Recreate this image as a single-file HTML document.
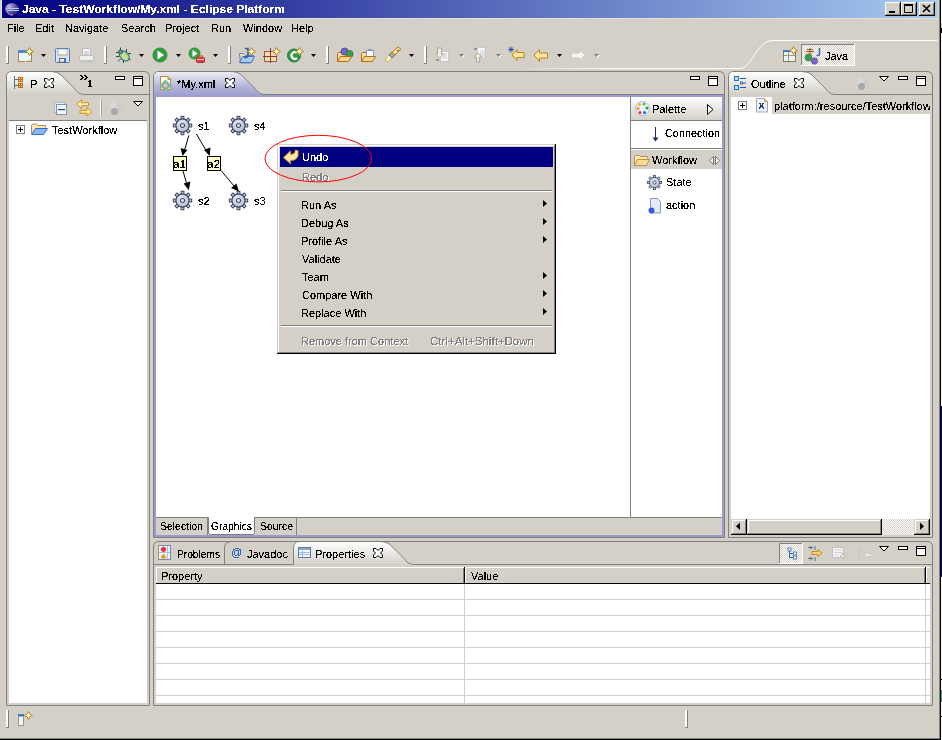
<!DOCTYPE html>
<html><head><meta charset="utf-8">
<style>
html,body{margin:0;padding:0;width:942px;height:740px;overflow:hidden;background:#D4D0C8;}
svg{display:block;will-change:transform;}
text{font-family:"Liberation Sans",sans-serif;font-size:11px;fill:#000;filter:url(#crisp);}
.b{font-weight:bold;}
.dis{fill:#808080;}
.sh{fill:#fff;}
</style></head>
<body>
<svg width="942" height="740" viewBox="0 0 942 740">
<defs><filter id="crisp" x="-10%" y="-20%" width="120%" height="140%" filterUnits="objectBoundingBox"><feComponentTransfer><feFuncA type="discrete" tableValues="0 0 1 1 1"/></feComponentTransfer></filter>
  <linearGradient id="gTitle" x1="0" x2="1" y1="0" y2="0">
    <stop offset="0" stop-color="#000080"/><stop offset="1" stop-color="#A6CAF0"/>
  </linearGradient>
  <linearGradient id="gTabW" x1="0" x2="0" y1="0" y2="1">
    <stop offset="0" stop-color="#FFFFFF"/><stop offset="1" stop-color="#D4D0C8"/>
  </linearGradient>
  <linearGradient id="gTabE" x1="0" x2="0" y1="0" y2="1">
    <stop offset="0" stop-color="#EEEEF6"/><stop offset="0.55" stop-color="#B6B6DA"/><stop offset="1" stop-color="#9A9ACC"/>
  </linearGradient>
  <linearGradient id="gPal" x1="0" x2="0" y1="0" y2="1">
    <stop offset="0" stop-color="#FFFFFF"/><stop offset="1" stop-color="#D4D0C8"/>
  </linearGradient>
  <linearGradient id="gPersp" x1="0" x2="1" y1="0" y2="0">
    <stop offset="0" stop-color="#D4D0C8"/><stop offset="1" stop-color="#FFFFFF"/>
  </linearGradient>
  <pattern id="chk" width="2" height="2" patternUnits="userSpaceOnUse">
    <rect width="2" height="2" fill="#D4D0C8"/><rect width="1" height="1" fill="#FFFFFF"/><rect x="1" y="1" width="1" height="1" fill="#FFFFFF"/>
  </pattern>

  <g id="closeX"><path d="M0.5 0.5H3L5 2.5L7 0.5H9.5V3L7.5 5L9.5 7V9.5H7L5 7.5L3 9.5H0.5V7L2.5 5L0.5 3Z" fill="#fff" stroke="#000"/></g>
  <g id="minBtn"><rect x="0.5" y="0.5" width="9" height="3" fill="#fff" stroke="#000"/></g>
  <g id="maxBtn"><rect x="0.5" y="0.5" width="9" height="9" fill="#fff" stroke="#000"/><rect x="1" y="2" width="8" height="1" fill="#000"/></g>
  <g id="viewMenu"><path d="M0.5 0.5H9.5L5 5Z" fill="#fff" stroke="#000" stroke-linejoin="bevel"/></g>
  <g id="plusBox"><rect x="0.5" y="0.5" width="8" height="8" fill="#fff" stroke="#808080"/><path d="M2 4.5H7M4.5 2V7" stroke="#000"/></g>

  <g id="gear">
   <g fill="#D0D6E4" stroke="#3A4262" stroke-width="1"><rect x="-1.4" y="-9.2" width="2.8" height="3" transform="rotate(0)"/><rect x="-1.4" y="-9.2" width="2.8" height="3" transform="rotate(45)"/><rect x="-1.4" y="-9.2" width="2.8" height="3" transform="rotate(90)"/><rect x="-1.4" y="-9.2" width="2.8" height="3" transform="rotate(135)"/><rect x="-1.4" y="-9.2" width="2.8" height="3" transform="rotate(180)"/><rect x="-1.4" y="-9.2" width="2.8" height="3" transform="rotate(225)"/><rect x="-1.4" y="-9.2" width="2.8" height="3" transform="rotate(270)"/><rect x="-1.4" y="-9.2" width="2.8" height="3" transform="rotate(315)"/></g>
   <circle cx="0" cy="0" r="6.6" fill="url(#gGear)" stroke="#3A4262" stroke-width="1.1"/>
   <circle cx="0" cy="0" r="2" fill="#fff" stroke="#3A4262" stroke-width="1.2"/>
  </g>
  <radialGradient id="gGear" cx="0.4" cy="0.35" r="0.75"><stop offset="0" stop-color="#E4E8F2"/><stop offset="1" stop-color="#B0B8CC"/></radialGradient>
  <g id="subArrow"><path d="M0 0V7L4 3.5Z" fill="#000"/></g>
<g id="star"><path d="M0 -4 L1.3 -1.3 L4 0 L1.3 1.3 L0 4 L-1.3 1.3 L-4 0 L-1.3 -1.3 Z" fill="#FFF6C8" stroke="#B8880C" stroke-width="1" stroke-linejoin="round"/><path d="M0 -2.5V2.5M-2.5 0H2.5" stroke="#fff" stroke-width="0.9"/></g></defs>

<!-- window frame -->
<rect x="0" y="0" width="942" height="740" fill="#D4D0C8"/>
<rect x="1" y="0" width="1" height="19" fill="#ECE9E2"/><rect x="1" y="18" width="936" height="1" fill="#E4E1DA"/>
<rect x="939" y="0" width="1" height="739" fill="#808080"/>
<rect x="940" y="0" width="1" height="740" fill="#000"/>
<rect x="941" y="0" width="1" height="740" fill="#FFFFFF"/>
<rect x="941" y="406" width="1" height="171" fill="#000080"/><rect x="941" y="23" width="1" height="5" fill="#D4D0C8"/><rect x="941" y="28" width="1" height="5" fill="#000"/><rect x="941" y="50" width="1" height="355" fill="#F4F4F4"/><rect x="941" y="679" width="1" height="1" fill="#000"/><rect x="941" y="690" width="1" height="12" fill="#4A9A8A"/><rect x="941" y="716" width="1" height="1" fill="#000"/>
<rect x="0" y="738" width="940" height="1" fill="#808080"/>
<rect x="0" y="739" width="941" height="1" fill="#000"/>

<!-- title bar -->
<rect x="2" y="0" width="935" height="18" fill="url(#gTitle)"/>
<text x="22" y="13" class="b" style="fill:#fff" textLength="263" lengthAdjust="spacingAndGlyphs">Java - TestWorkflow/My.xml - Eclipse Platform</text>

<!-- window buttons -->
<g id="wbtns">
 <g transform="translate(885,2)">
  <rect x="0" y="0" width="16" height="14" fill="#000"/>
  <rect x="0" y="0" width="15" height="13" fill="#fff"/>
  <rect x="1" y="1" width="14" height="12" fill="#808080"/>
  <rect x="1" y="1" width="13" height="11" fill="#D4D0C8"/>
  <rect x="4" y="9" width="6" height="2" fill="#000"/>
 </g>
 <g transform="translate(901,2)">
  <rect x="0" y="0" width="16" height="14" fill="#000"/>
  <rect x="0" y="0" width="15" height="13" fill="#fff"/>
  <rect x="1" y="1" width="14" height="12" fill="#808080"/>
  <rect x="1" y="1" width="13" height="11" fill="#D4D0C8"/>
  <path d="M3.5 2.5 h8 v8 h-8 z" fill="none" stroke="#000"/><rect x="3" y="2" width="9" height="2" fill="#000"/>
 </g>
 <g transform="translate(919,2)">
  <rect x="0" y="0" width="16" height="14" fill="#000"/>
  <rect x="0" y="0" width="15" height="13" fill="#fff"/>
  <rect x="1" y="1" width="14" height="12" fill="#808080"/>
  <rect x="1" y="1" width="13" height="11" fill="#D4D0C8"/>
  <path d="M4 3 L11 10 M11 3 L4 10" stroke="#000" stroke-width="1.6"/>
 </g>
</g>
<!-- eclipse icon -->
<g transform="translate(5,3)">
  <defs><radialGradient id="gEcl" cx="0.3" cy="0.3" r="0.8"><stop offset="0" stop-color="#C8B8E8"/><stop offset="0.5" stop-color="#6A5AA8"/><stop offset="1" stop-color="#2A2070"/></radialGradient></defs>
  <ellipse cx="7" cy="6" rx="7" ry="6" fill="url(#gEcl)"/>
  <path d="M2 8.5 A6 6 0 0 0 8 12" stroke="#E8A0C8" stroke-width="1" fill="none"/>
  <rect x="1" y="5" width="13" height="1" fill="#A8C8F0"/>
  <rect x="1" y="7" width="13" height="1" fill="#A8C8F0"/>
</g>

<!-- menu -->
<text x="7" y="32">File</text>
<text x="35" y="32">Edit</text>
<text x="65" y="32">Navigate</text>
<text x="121" y="32">Search</text>
<text x="165" y="32">Project</text>
<text x="211" y="32">Run</text>
<text x="243" y="32">Window</text>
<text x="291" y="32">Help</text>

<!-- perspective bar line -->
<linearGradient id="gPL" gradientUnits="userSpaceOnUse" x1="520" y1="0" x2="610" y2="0"><stop offset="0" stop-color="#D4D0C8"/><stop offset="1" stop-color="#FFFFFF"/></linearGradient>
<path d="M520 68.5 H740 C752 68.5 756 40.5 773 40.5 H937" fill="none" stroke="url(#gPL)" stroke-width="1"/>


<!-- TOOLBAR -->
<g id="toolbar">
 <!-- separators -->
 <g><rect x="6" y="46" width="2" height="17" fill="#fff"/><rect x="8" y="46" width="1" height="18" fill="#808080"/><rect x="6" y="63" width="3" height="1" fill="#808080"/><rect x="104" y="46" width="2" height="17" fill="#fff"/><rect x="106" y="46" width="1" height="18" fill="#808080"/><rect x="104" y="63" width="3" height="1" fill="#808080"/><rect x="228" y="46" width="2" height="17" fill="#fff"/><rect x="230" y="46" width="1" height="18" fill="#808080"/><rect x="228" y="63" width="3" height="1" fill="#808080"/><rect x="326" y="46" width="2" height="17" fill="#fff"/><rect x="328" y="46" width="1" height="18" fill="#808080"/><rect x="326" y="63" width="3" height="1" fill="#808080"/><rect x="424" y="46" width="2" height="17" fill="#fff"/><rect x="426" y="46" width="1" height="18" fill="#808080"/><rect x="424" y="63" width="3" height="1" fill="#808080"/><rect x="6" y="710" width="2" height="17" fill="#fff"/><rect x="8" y="710" width="1" height="18" fill="#808080"/><rect x="6" y="727" width="3" height="1" fill="#808080"/><rect x="685" y="710" width="2" height="17" fill="#fff"/><rect x="687" y="710" width="1" height="18" fill="#808080"/><rect x="685" y="727" width="3" height="1" fill="#808080"/></g>
 <!-- dropdown arrows -->
 <g fill="#000">
  <path d="M41 54h5l-2.5 3z"/><path d="M139 54h5l-2.5 3z"/><path d="M176 54h5l-2.5 3z"/><path d="M213 54h5l-2.5 3z"/><path d="M311 54h5l-2.5 3z"/><path d="M409 54h5l-2.5 3z"/><path d="M557 54h5l-2.5 3z"/>
 </g>
 <g fill="#fff"><path d="M460 55h5l-2.5 3z"/><path d="M497 55h5l-2.5 3z"/><path d="M595 55h5l-2.5 3z"/></g>
 <g fill="#808080"><path d="M459 54h5l-2.5 3z"/><path d="M496 54h5l-2.5 3z"/><path d="M594 54h5l-2.5 3z"/></g>

 <!-- new wizard -->
 <rect x="18.5" y="50.5" width="13" height="11" fill="#EAF6FF" stroke="#A08850"/>
 <rect x="18" y="50" width="12" height="3" fill="#4A88CC"/>
 <path d="M31 58 Q30 61 25 61.5" stroke="#F8D060" fill="none"/>
 <use href="#star" x="29.5" y="51.5"/>

 <!-- save -->
 <rect x="55.5" y="48.5" width="14" height="14" rx="1" fill="#D8E4F4" stroke="#5A7AB0"/>
 <rect x="58" y="49" width="9" height="6" fill="#F4F8FC" stroke="#8090A8" stroke-width="0.6"/>
 <rect x="58" y="54.5" width="9" height="1" fill="#E8C060"/>
 <rect x="59" y="58" width="7" height="5" fill="#4A70B0"/>
 <rect x="60" y="59" width="4" height="3" fill="#E8F0FA"/>
 <rect x="60" y="61" width="4" height="1" fill="#E8C060"/>

 <!-- print (disabled) -->
 <path d="M82.5 48.5h6l2 2v6h-8z" fill="#FAFAFA" stroke="#B8B8B8"/>
 <path d="M84 52h5M84 54h5" stroke="#A8A8A8" stroke-width="0.9"/>
 <rect x="79.5" y="55.5" width="14" height="5" rx="1" fill="#EEEEEE" stroke="#BDBDBD"/>
 <rect x="80" y="60" width="13" height="2.5" fill="#C4C4C4"/>
 <!-- debug bug -->
 <g stroke="#1E4E5A" stroke-width="1" fill="none">
  <path d="M120.5 47.5v3M116 52.5h3M116 56.5h3.5M118 61.5l2.5-2.5M123.5 63v-3M126.5 49v3M128 53.5h3M128 58l2.5 2"/>
 </g>
 <ellipse cx="124.3" cy="56" rx="5.8" ry="4" transform="rotate(45 124.3 56)" fill="#B8D890" stroke="#2A6A7A"/>
 <path d="M121.5 54l5 5" stroke="#E8F4D8" stroke-width="1"/>
 <circle cx="120.5" cy="52" r="2" fill="#6AA060" stroke="#1E4E5A" stroke-width="0.8"/>
 <!-- run -->
 <circle cx="160" cy="55" r="7" fill="#3AA040" stroke="#2A8A3A"/>
 <circle cx="160" cy="55" r="5.5" fill="#2E9A3E"/>
 <path d="M157.5 50.5 L164 55 L157.5 59.5 Z" fill="#fff"/>

 <!-- run ext -->
 <circle cx="194.5" cy="53.5" r="5.5" fill="#3AA040" stroke="#2A8A3A"/>
 <path d="M192.5 50 L197.5 53.5 L192.5 57 Z" fill="#fff"/>
 <rect x="196.5" y="57.5" width="8" height="5" rx="1" fill="#D84040" stroke="#B03030"/>
 <rect x="198.5" y="56" width="4" height="2" fill="none" stroke="#D84040"/>
 <rect x="197" y="59" width="7" height="1" fill="#F8C0C0"/>

 <!-- new java project -->
 <path d="M239.5 53.5 h4 l2 2 h8 v2 l-3 5.5 h-10 z" fill="#F8E4B0" stroke="#5A80C0"/>
 <path d="M239.5 62.5 l3 -6 h12 l-3 6 z" fill="#A8CCF0" stroke="#4A70C0"/>
 <path d="M245 48.5 h3 v7 q0 2 -2.5 2 h-1.5" stroke="#2A5AA8" stroke-width="1.6" fill="none"/>
 <use href="#star" x="251.5" y="51.5"/>

 <!-- new package -->
 <rect x="264.5" y="51.5" width="12" height="10" fill="#F4D8B0" stroke="#A05A38"/>
 <path d="M270.5 48 v15 M263 56.5 h14" stroke="#7A4030" stroke-width="1"/>
 <use href="#star" x="276.5" y="51.5"/>

 <!-- new class -->
 <circle cx="294" cy="55.5" r="6.5" fill="#2E9A4A" stroke="#1E7A3A"/>
 <path d="M297 52.8 A3.4 3.4 0 1 0 297 58.2" stroke="#fff" stroke-width="2.2" fill="none"/>
 <use href="#star" x="299.5" y="51.5"/>

 <!-- open type -->
 <path d="M337.5 61.5 v-8 l1-1 h4 l1 1 h6 v1" fill="#F8DCA0" stroke="#B86A10"/>
 <circle cx="344.5" cy="51.5" r="3.5" fill="#7A68C0" stroke="#5A48A0"/>
 <circle cx="349.5" cy="54" r="3.5" fill="#3AA050" stroke="#2A7A3A"/>
 <path d="M337.5 61.5 l3 -5 h11 l-3 5 z" fill="#FCD890" stroke="#B86A10"/>

 <!-- open task -->
 <path d="M361.5 61.5 v-8 l1-1 h4 l1 1 h6 v1" fill="#F8DCA0" stroke="#B86A10"/>
 <rect x="366.5" y="50.5" width="7" height="6" fill="#F4F8FF" stroke="#8A9AC0"/>
 <rect x="368" y="49" width="4" height="2" fill="#8A9AC0"/>
 <path d="M361.5 61.5 l3 -5 h11 l-3 5 z" fill="#FCD890" stroke="#B86A10"/>

 <!-- search pen -->
 <path d="M385 60 l3 2 l4 -4 l-3 -3 z" fill="#FFF8C0" stroke="#D8B060"/>
 <path d="M389 55 l3 3 l3 -3 l-3 -3 z" fill="#A8A8A8" stroke="#707070"/>
 <path d="M392 52 l3 3 l6 -6 l-3 -2 z" fill="#F8D890" stroke="#C08020"/>
 <circle cx="398" cy="50.5" r="0.8" fill="#2A4AA0"/>

 <!-- next annotation (disabled) -->
 <rect x="440.5" y="51.5" width="8" height="10" fill="#F8F8F8" stroke="#C8C8C8"/>
 <path d="M442 54h5M442 56h5M442 58h5" stroke="#C0C0C0" stroke-width="0.8"/>
 <path d="M437.5 48 v6 h-2 l4 4 l4 -4 h-2 v-6 z" fill="#F0EEE0" stroke="#A8A898"/>
 <rect x="436" y="59" width="3" height="2" fill="#9098A8"/>

 <!-- prev annotation (disabled) -->
 <rect x="477.5" y="47.5" width="8" height="11" fill="#F8F8F8" stroke="#C8C8C8"/>
 <path d="M480 51h5M480 53h5M480 55h5M480 57h5" stroke="#C0C0C0" stroke-width="0.8"/>
 <rect x="474" y="48" width="3" height="2" fill="#9098A8"/>
 <path d="M476.5 62 v-5 h-2.5 l4 -4 l4 4 h-2.5 v5 z" fill="#F0EEE0" stroke="#A8A898"/>

 <!-- last edit -->
 <path d="M512 55 l5 -5.5 v3 h7 v5 h-7 v3 z" fill="#FCE8A0" stroke="#C08010"/>
 <path d="M508 49.5 h6 M511 46.5 v6 M509 47.5 l4 4 M513 47.5 l-4 4" stroke="#2A4AA8" stroke-width="0.9"/>

 <!-- back -->
 <path d="M534 55 l5.5 -5.5 v3.5 h8 v5 h-8 v3.5 z" fill="#FCE8A0" stroke="#C08010"/>
 <!-- forward disabled -->
 <path d="M585 55 l-5.5 -5.5 v3.5 h-8 v5 h8 v3.5 z" fill="#F4F4F0" stroke="#C8C8C0"/>

 <!-- perspective: new persp icon -->
 <rect x="783.5" y="50.5" width="12" height="11" fill="#E8F4FC" stroke="#8A7A50"/>
 <rect x="783" y="50" width="11" height="2" fill="#3A7ACC"/>
 <path d="M788.5 52v9M784 55.5h11" stroke="#A89870"/>
 <use href="#star" x="793.5" y="50.5"/>
 <!-- java button -->
 <rect x="801" y="44" width="54" height="22" fill="url(#chk)"/>
 <path d="M801.5 65 V44.5 H854" stroke="#808080" fill="none"/>
 <path d="M801 65.5 H854.5 V44" stroke="#fff" fill="none"/>
 <rect x="807" y="49" width="6" height="5" fill="#F4D8A8"/>
 <path d="M810 48v8M806 51.5h8M807 49.5h6" stroke="#8A5030" stroke-width="0.9"/>
 <path d="M819.5 48v6q0 1.5-1.5 1.5h-1.5" stroke="#2A6AB8" stroke-width="1.5" fill="none"/>
 <circle cx="808.5" cy="57.5" r="3.5" fill="#3A9A50" stroke="#2A7A40" stroke-width="0.6"/>
 <circle cx="814.5" cy="61" r="3.2" fill="#7A68C0" stroke="#5A48A0" stroke-width="0.6"/>
 <text x="825" y="60">Java</text>
</g>

<!-- LEFT PANEL -->
<path d="M6.5 705.5 V77 Q6.5 71.5 12 71.5 H144 Q149.5 71.5 149.5 77 V705.5 Z" fill="#D4D0C8" stroke="#808080"/>
<path d="M7 94.5 V77 Q7 72 12 72 H50 C55 72 58 73 61 75.5 L74 88 C77.5 92.5 80 94.5 85 94.5 Z" fill="url(#gTabW)"/>
<path d="M50 71.5 C55 71.5 58 72.5 61 75 L74 88 C77.5 92.5 80 94.5 85 94.5 H149" fill="none" stroke="#808080"/>
<!-- tab icon -->
<path d="M14.5 76v13M14.5 79.5H18M14.5 85.5H18" stroke="#5A6A88" fill="none"/>
<rect x="18" y="77" width="5" height="5" fill="#C06A20"/><rect x="18" y="83" width="5" height="5" fill="#C06A20"/>
<g fill="#FFE890"><rect x="19" y="78" width="1" height="1"/><rect x="21" y="78" width="1" height="1"/><rect x="19" y="80" width="1" height="1"/><rect x="21" y="80" width="1" height="1"/><rect x="19" y="84" width="1" height="1"/><rect x="21" y="84" width="1" height="1"/><rect x="19" y="86" width="1" height="1"/><rect x="21" y="86" width="1" height="1"/></g>
<text x="30" y="88">P</text>
<use href="#closeX" x="44" y="78"/>
<!-- chevron 1 -->
<g fill="#000"><rect x="80" y="75" width="2" height="1"/><rect x="81" y="76" width="2" height="1"/><rect x="82" y="77" width="2" height="1"/><rect x="81" y="78" width="2" height="1"/><rect x="80" y="79" width="2" height="1"/><rect x="84" y="75" width="2" height="1"/><rect x="85" y="76" width="2" height="1"/><rect x="86" y="77" width="2" height="1"/><rect x="85" y="78" width="2" height="1"/><rect x="84" y="79" width="2" height="1"/><rect x="89" y="80" width="2" height="7"/><rect x="88" y="81" width="1" height="1"/><rect x="88" y="86" width="4" height="1"/></g>
<use href="#minBtn" x="115" y="76"/>
<use href="#maxBtn" x="133" y="76"/>
<!-- toolbar -->
<rect x="54.5" y="102.5" width="10" height="10" fill="#E0F0FC" stroke="#A8B8D0"/>
<rect x="56.5" y="104.5" width="10" height="10" fill="#F0FAFF" stroke="#8890A8"/>
<rect x="58" y="109" width="7" height="1.2" fill="#1A4A8A"/>
<path d="M81.5 100l-5 4.2 5 4.3v-2.8h7v-3h-7z" fill="#FFF0B8" stroke="#D09018" stroke-width="1"/>
<path d="M87 107.5l5 4.3-5 4.2v-2.7h-7v-3h7z" fill="#FFE8A0" stroke="#D09018" stroke-width="1"/>
<rect x="100" y="99" width="1" height="18" fill="#fff"/><rect x="101" y="99" width="1" height="18" fill="#A0A0A0"/>
<circle cx="113.3" cy="105" r="3.5" fill="#D8D8D8"/><circle cx="120" cy="107.2" r="3.5" fill="#CCCCCC"/><circle cx="114.5" cy="111.4" r="3.5" fill="#A8A8A8"/>
<use href="#viewMenu" x="133" y="101"/>
<rect x="9" y="120" width="138" height="583" fill="#fff"/>
<rect x="9" y="120" width="138" height="1" fill="#808080"/>
<use href="#plusBox" x="16" y="125"/>
<path d="M31.5 133.5v-8l1-1.5h4l1 1.5h8v2" fill="#FCE8B0" stroke="#A8906A"/>
<path d="M31.5 134.5l4-6h12l-4 6z" fill="#88B8F0" stroke="#3A68C8"/>
<text x="52" y="134">TestWorkflow</text>

<!-- EDITOR -->
<path d="M153.5 537.5 V77 Q153.5 71.5 159 71.5 H719 Q724.5 71.5 724.5 77 V537.5 Z" fill="#D4D0C8" stroke="#808080"/>
<path d="M154 97 V77 Q154 72 159 72 H230.5 C235.5 72 238.5 73 241.5 75.5 L254.5 88 C258 92.5 260.5 94.5 265.5 94.5 H724 V97 Z" fill="url(#gTabE)"/>
<path d="M230.5 71.5 C235.5 71.5 238.5 72.5 241.5 75 L254.5 88 C258 92.5 260.5 94.5 265.5 94.5 H724" fill="none" stroke="#808080"/>
<rect x="266" y="95" width="458" height="2" fill="#9A9ACC"/>
<rect x="154" y="95" width="2" height="442" fill="#9A9ACC"/>
<rect x="722" y="95" width="2" height="442" fill="#9A9ACC"/>
<rect x="154" y="535" width="570" height="2" fill="#9A9ACC"/>
<rect x="156" y="97" width="566" height="420" fill="#fff"/>
<rect x="156" y="517" width="566" height="18" fill="#D4D0C8"/>
<!-- editor tab -->
<path d="M160.5 76.5h7.5l2.5 2.5v10.5h-10z" fill="#FFF" stroke="#B8902A"/>
<path d="M168 76.5v3h2.5" fill="#E8C060" stroke="#B8902A"/>
<path d="M165.5 80l5.5 5.5-5.5 5.5-5.5-5.5z" fill="#B8B8B8" stroke="#40D080" stroke-width="1"/>
<path d="M165.5 82l3.5 3.5-3.5 3.5-3.5-3.5z" fill="#C8C8C8" stroke="#808080" stroke-width="1"/>
<text x="177" y="88">*My.xml</text>
<use href="#closeX" x="225" y="78"/>
<use href="#minBtn" x="690" y="76"/>
<use href="#maxBtn" x="708" y="76"/>

<!-- diagram -->
<use href="#gear" x="182.5" y="125.5"/>
<use href="#gear" x="238.5" y="125.5"/>
<use href="#gear" x="182.5" y="200.5"/>
<use href="#gear" x="238.5" y="200.5"/>
<text x="198" y="130">s1</text>
<text x="254" y="130">s4</text>
<text x="198" y="205">s2</text>
<text x="254" y="205">s3</text>
<rect x="173.5" y="156.5" width="13" height="14" fill="#FFFFCC" stroke="#000"/>
<rect x="207.5" y="156.5" width="13" height="14" fill="#FFFFCC" stroke="#000"/>
<text x="173" y="168" textLength="13" lengthAdjust="spacingAndGlyphs">a1</text>
<text x="207" y="168" textLength="13" lengthAdjust="spacingAndGlyphs">a2</text>
<g stroke="#000" stroke-width="1" fill="none">
 <path d="M188.8 135.4 L184 152"/>
 <path d="M196.4 134 L207 152"/>
 <path d="M183 171 L186.8 184"/>
 <path d="M221 170.4 L234 186"/>
</g>
<g fill="#000">
 <path d="M182.5 156 L180.6 148 L187.4 149.9 Z"/>
 <path d="M209.8 156 L204 150 L210.4 147.4 Z"/>
 <path d="M188.8 190.3 L183.6 183.6 L190.4 181.6 Z"/>
 <path d="M239 191.4 L231 188 L236.4 183.6 Z"/>
</g>

<!-- palette -->
<rect x="630" y="97" width="92" height="420" fill="#fff"/>
<rect x="630" y="97" width="1" height="420" fill="#808080"/>
<rect x="631" y="97" width="91" height="23" fill="url(#gPal)"/>
<rect x="631" y="120" width="91" height="1" fill="#808080"/>
<circle cx="642.5" cy="108.5" r="7" fill="#EEF2FA" stroke="#B0C0D8"/>
<circle cx="639.5" cy="104.5" r="1.5" fill="#F8B020"/><circle cx="644" cy="104" r="1.5" fill="#60B040"/>
<circle cx="638" cy="108.5" r="1.5" fill="#F89020"/><circle cx="647" cy="108" r="1.5" fill="#30A030"/>
<circle cx="640" cy="112.5" r="1.5" fill="#E03040"/><circle cx="644.5" cy="112.5" r="1.5" fill="#2060E0"/>
<text x="652" y="113">Palette</text>
<path d="M707.5 104.5V114.5L713 109.5Z" fill="#fff" stroke="#000"/>
<!-- connection -->
<path d="M655.5 127v13" stroke="#1A2A6A"/>
<path d="M652.5 137.5h6l-3 4z" fill="#1A2A6A"/>
<text x="665" y="137" textLength="55" lengthAdjust="spacingAndGlyphs">Connection</text>
<rect x="631" y="148" width="91" height="1" fill="#808080"/>
<rect x="631" y="150" width="91" height="19" fill="#D4D0C8"/>
<rect x="631" y="149" width="91" height="1" fill="#fff"/>
<path d="M634.5 165.5v-9l1-1h4l1 1h7v2" fill="#FCE8B0" stroke="#C09040"/>
<path d="M634.5 165.5l3-6h12l-3 6z" fill="#FCDC98" stroke="#C09040"/>
<text x="652" y="164">Workflow</text>
<path d="M709.5 160.5L713.5 156.5V164.5Z M719.5 160.5L715.5 156.5V164.5Z" fill="#fff" stroke="#707070" stroke-linejoin="round"/>
<use href="#gear" transform="translate(654.5,182.5) scale(0.78)"/>
<text x="666" y="186">State</text>
<path d="M650.5 198.5h7l3 3v11.5h-10z" fill="#E0ECFA" stroke="#8898B8"/>
<circle cx="651.5" cy="210.5" r="3" fill="#3A5AD8"/>
<text x="666" y="209">action</text>

<!-- bottom tabs of editor -->
<rect x="156" y="517" width="566" height="1" fill="#808080"/>
<path d="M208.5 517.5V532.5Q208.5 534.5 210.5 534.5H252.5Q254.5 534.5 254.5 532.5V517.5" fill="#fff" stroke="#808080"/>
<rect x="209" y="517" width="45" height="1" fill="#fff"/>
<rect x="207" y="518" width="1" height="17" fill="#808080"/>
<rect x="296" y="518" width="1" height="17" fill="#808080"/>
<text x="160" y="530" textLength="43" lengthAdjust="spacingAndGlyphs">Selection</text>
<text x="211" y="530" textLength="41" lengthAdjust="spacingAndGlyphs">Graphics</text>
<text x="260" y="530" textLength="33" lengthAdjust="spacingAndGlyphs">Source</text>

<!-- OUTLINE -->
<path d="M728.5 537.5 V77 Q728.5 71.5 734 71.5 H927 Q932.5 71.5 932.5 77 V537.5 Z" fill="#D4D0C8" stroke="#808080"/>
<path d="M729 94.5 V77 Q729 72 734 72 H801 C806 72 809 73 812 75.5 L825 88 C828.5 92.5 831 94.5 836 94.5 Z" fill="url(#gTabW)"/>
<path d="M801 71.5 C806 71.5 809 72.5 812 75 L825 88 C828.5 92.5 831 94.5 836 94.5 H932" fill="none" stroke="#808080"/>
<!-- outline icon -->
<rect x="734.5" y="76.5" width="4" height="4" fill="#B8DCF8" stroke="#2070C8"/>
<rect x="734.5" y="85.5" width="4" height="4" fill="#B8DCF8" stroke="#2070C8"/>
<path d="M740 78.5h6M740 87.5h6M743 83h3" stroke="#1A5AA8" fill="none"/>
<rect x="740.5" y="82" width="2" height="2" fill="none" stroke="#1A5AA8" stroke-width="0.8"/>
<text x="751" y="88">Outline</text>
<use href="#closeX" x="794" y="78"/>
<circle cx="860.5" cy="81" r="3.5" fill="#D8D8D8"/><circle cx="866.5" cy="83.5" r="3.5" fill="#CCCCCC"/><circle cx="861.5" cy="86.5" r="3.5" fill="#A8A8A8"/>
<use href="#viewMenu" x="879" y="76"/>
<use href="#minBtn" x="898" y="76"/>
<use href="#maxBtn" x="916" y="76"/>
<rect x="731" y="97" width="199" height="438" fill="#fff"/>
<rect x="772" y="97" width="158" height="17" fill="#D4D0C8"/>
<use href="#plusBox" x="738" y="101"/>
<path d="M756.5 98.5h8l3 3v10.5h-11z" fill="#EEF4FC" stroke="#98A8C8"/>
<path d="M764.5 98.5v3h3" fill="#E8C060" stroke="#C8A040"/>
<text x="758.5" y="108.5" style="font-size:9px;fill:#203C70;font-weight:bold">X</text>
<svg x="773" y="96" width="157" height="18"><text x="1" y="14">platform:/resource/TestWorkflow</text></svg>
<!-- scrollbar -->
<rect x="731" y="519" width="199" height="16" fill="#D4D0C8"/>
<rect x="882" y="519" width="33" height="16" fill="url(#chk)"/>
<g>
 <rect x="731" y="519" width="16" height="16" fill="#000"/><rect x="731" y="519" width="15" height="15" fill="#D4D0C8"/><rect x="732" y="520" width="14" height="14" fill="#808080"/><rect x="732" y="520" width="13" height="13" fill="#fff"/><rect x="733" y="521" width="12" height="12" fill="#D4D0C8"/>
 <path d="M740 522.5V530L736 526.2Z" fill="#000"/>
 <rect x="747" y="519" width="135" height="16" fill="#000"/><rect x="747" y="519" width="134" height="15" fill="#D4D0C8"/><rect x="748" y="520" width="133" height="14" fill="#808080"/><rect x="748" y="520" width="132" height="13" fill="#fff"/><rect x="749" y="521" width="131" height="12" fill="#D4D0C8"/>
 <rect x="914" y="519" width="16" height="16" fill="#000"/><rect x="914" y="519" width="15" height="15" fill="#D4D0C8"/><rect x="915" y="520" width="14" height="14" fill="#808080"/><rect x="915" y="520" width="13" height="13" fill="#fff"/><rect x="916" y="521" width="12" height="12" fill="#D4D0C8"/>
 <path d="M920 522.5V530L924 526.2Z" fill="#000"/>
</g>

<!-- BOTTOM PANEL -->
<path d="M153.5 705.5 V547 Q153.5 541.5 159 541.5 H927 Q932.5 541.5 932.5 547 V705.5 Z" fill="#D4D0C8" stroke="#808080"/>
<!-- properties tab active -->
<path d="M293 564 V548 Q293 542 299 542 H379.5 C384.5 542 387.5 543 390.5 545.5 L403.5 558 C407 562.5 409.5 564.5 414.5 564.5 Z" fill="url(#gTabW)"/>
<path d="M379.5 541.5 C384.5 541.5 387.5 542.5 390.5 545 L403.5 558 C407 562.5 409.5 564.5 414.5 564.5 H932" fill="none" stroke="#808080"/>
<path d="M154 564.5 H293.5 V548 Q293.5 542 299 541.5" fill="none" stroke="#808080"/>
<path d="M224.5 564 V548 Q224.5 542 230 542" fill="none" stroke="#808080"/>
<!-- problems icon -->
<rect x="158.5" y="545.5" width="12" height="14" fill="#EAF8FF" stroke="#7888B0"/>
<path d="M158.5 545.5V559" stroke="#A89868" fill="none"/>
<rect x="167" y="546" width="1" height="13" fill="#B0C0D8"/>
<rect x="159" y="552" width="11" height="1" fill="#B0C0D8"/>
<circle cx="163.5" cy="549.3" r="2.6" fill="#E83040"/>
<path d="M161 558.5h5v-2l-1-1.2-1.5-1.8-1.5 1.8-1 1.2z" fill="#F0A020"/>
<text x="177" y="558" textLength="43" lengthAdjust="spacingAndGlyphs">Problems</text>
<text x="231" y="556" style="font-size:11px;fill:#2A6AC8">@</text>
<text x="247" y="558">Javadoc</text>
<rect x="298.5" y="547.5" width="12" height="10" fill="#F4F8FF" stroke="#5A78B0"/>
<rect x="299" y="548" width="11" height="2" fill="#90A8D0"/>
<path d="M299 552.5h11M299 554.5h11M302.5 550v7" stroke="#90A8D0" stroke-width="0.8"/>
<text x="315" y="558">Properties</text>
<use href="#closeX" x="373" y="548"/>
<!-- toolbar -->
<rect x="779" y="543" width="24" height="21" fill="url(#chk)"/>
<path d="M779.5 563V543.5H802" stroke="#808080" fill="none"/>
<path d="M779 563.5H802.5V543" stroke="#fff" fill="none"/>
<path d="M789.5 549v9M789.5 553.5h4M789.5 557.5h4" stroke="#3A6AB0" fill="none"/>
<rect x="788" y="548" width="3" height="3" fill="#fff" stroke="#3A6AB0" stroke-width="0.8"/>
<rect x="793.5" y="552" width="3" height="3" fill="#fff" stroke="#3A6AB0" stroke-width="0.8"/>
<rect x="793.5" y="556" width="3" height="3" fill="#fff" stroke="#3A6AB0" stroke-width="0.8"/>
<path d="M808 547.5h5M810 545.5l2 2-2 2M815 546v4M808 558.5h5M810 556.5l2 2-2 2M815 557v4" stroke="#506080" fill="none" stroke-width="0.9"/>
<path d="M812 551.5h6v-2l4 3.5-4 3.5v-2h-6z" fill="#F8D870" stroke="#C08020" stroke-width="0.9"/>
<rect x="832.5" y="547.5" width="11" height="10" fill="#F4F4F4" stroke="#C0C0C0"/>
<path d="M834 550h8M834 552.5h8M834 555h5" stroke="#C8C8C8" stroke-width="0.8"/>
<path d="M840 556 l3-3v2h3v2h-3v2z" fill="#E8E8E0" stroke="#B8B8B0" stroke-width="0.8"/>
<path d="M858.5 546v14M858.5 551h4M858.5 556h4" stroke="#C8C8C8" fill="none"/>
<path d="M864 555 l4-4v2.5h4v3h-4v2.5z" fill="#E8E8E0" stroke="#C0C0B8" stroke-width="0.8"/>
<use href="#viewMenu" x="879" y="546"/>
<use href="#minBtn" x="898" y="546"/>
<use href="#maxBtn" x="916" y="546"/>
<!-- table -->
<rect x="156" y="584" width="774" height="119" fill="#fff"/>
<rect x="156" y="567" width="774" height="16" fill="#D4D0C8"/>
<rect x="156" y="567" width="774" height="1" fill="#fff"/>
<rect x="156" y="567" width="1" height="16" fill="#fff"/>
<rect x="156" y="583" width="774" height="1" fill="#000"/>
<rect x="463" y="568" width="1" height="15" fill="#808080"/>
<rect x="464" y="567" width="1" height="17" fill="#000"/>
<rect x="465" y="568" width="1" height="15" fill="#fff"/>
<rect x="924" y="568" width="1" height="15" fill="#808080"/>
<rect x="925" y="567" width="1" height="17" fill="#000"/>
<rect x="926" y="567" width="1" height="16" fill="#fff"/>
<text x="161" y="580">Property</text>
<text x="471" y="580">Value</text>
<g fill="#D4D0C8">
 <rect x="156" y="599" width="774" height="1"/><rect x="156" y="615" width="774" height="1"/><rect x="156" y="631" width="774" height="1"/>
 <rect x="156" y="647" width="774" height="1"/><rect x="156" y="663" width="774" height="1"/><rect x="156" y="679" width="774" height="1"/><rect x="156" y="695" width="774" height="1"/>
 <rect x="464" y="584" width="1" height="119"/><rect x="925" y="584" width="1" height="119"/>
</g>

<!-- STATUS BAR -->
<rect x="18.5" y="714.5" width="5" height="11" fill="#E8F8FF" stroke="#A89870"/>
<rect x="18" y="714" width="6" height="2.5" fill="#3A7ACC"/>
<use href="#star" x="28.5" y="715.5"/>

<!-- CONTEXT MENU -->
<g id="ctx">
 <rect x="277" y="144" width="279" height="210" fill="#000"/>
 <rect x="277" y="144" width="278" height="209" fill="#D4D0C8"/>
 <rect x="278" y="145" width="277" height="208" fill="#808080"/>
 <rect x="278" y="145" width="276" height="207" fill="#fff"/>
 <rect x="279" y="146" width="275" height="206" fill="#D4D0C8"/>
 <rect x="280" y="147" width="273" height="20" fill="#000080"/>
 <path d="M283.5 157.5 L290.5 151 V154.5 Q293.5 154.5 295 152.5 V150.5 H298 V156 Q297 159 293.5 160.3 H290.5 V163.8 Z" fill="#FCE9A8" stroke="#D8981C" stroke-width="1"/>
 <text x="302" y="161" style="fill:#fff">Undo</text>
 <text x="303" y="182" class="sh">Redo</text>
 <text x="302" y="181" class="dis">Redo</text>
 <rect x="281" y="190" width="271" height="1" fill="#808080"/>
 <rect x="281" y="191" width="271" height="1" fill="#fff"/>
 <text x="301" y="209">Run As</text>
 <text x="301" y="227">Debug As</text>
 <text x="301" y="245">Profile As</text>
 <text x="302" y="263">Validate</text>
 <text x="302" y="281">Team</text>
 <text x="302" y="299">Compare With</text>
 <text x="301" y="317">Replace With</text>
 <use href="#subArrow" x="543" y="200"/>
 <use href="#subArrow" x="543" y="218"/>
 <use href="#subArrow" x="543" y="236"/>
 <use href="#subArrow" x="543" y="272"/>
 <use href="#subArrow" x="543" y="290"/>
 <use href="#subArrow" x="543" y="308"/>
 <rect x="281" y="325" width="271" height="1" fill="#808080"/>
 <rect x="281" y="326" width="271" height="1" fill="#fff"/>
 <text x="302" y="346" class="sh">Remove from Context</text>
 <text x="301" y="345" class="dis">Remove from Context</text>
 <text x="431" y="346" class="sh" textLength="104" lengthAdjust="spacingAndGlyphs">Ctrl+Alt+Shift+Down</text>
 <text x="430" y="345" class="dis" textLength="104" lengthAdjust="spacingAndGlyphs">Ctrl+Alt+Shift+Down</text>
</g>
<ellipse cx="318.3" cy="158.6" rx="53.3" ry="23.3" fill="none" stroke="#FF0000" stroke-width="1"/>
</svg>
</body></html>
